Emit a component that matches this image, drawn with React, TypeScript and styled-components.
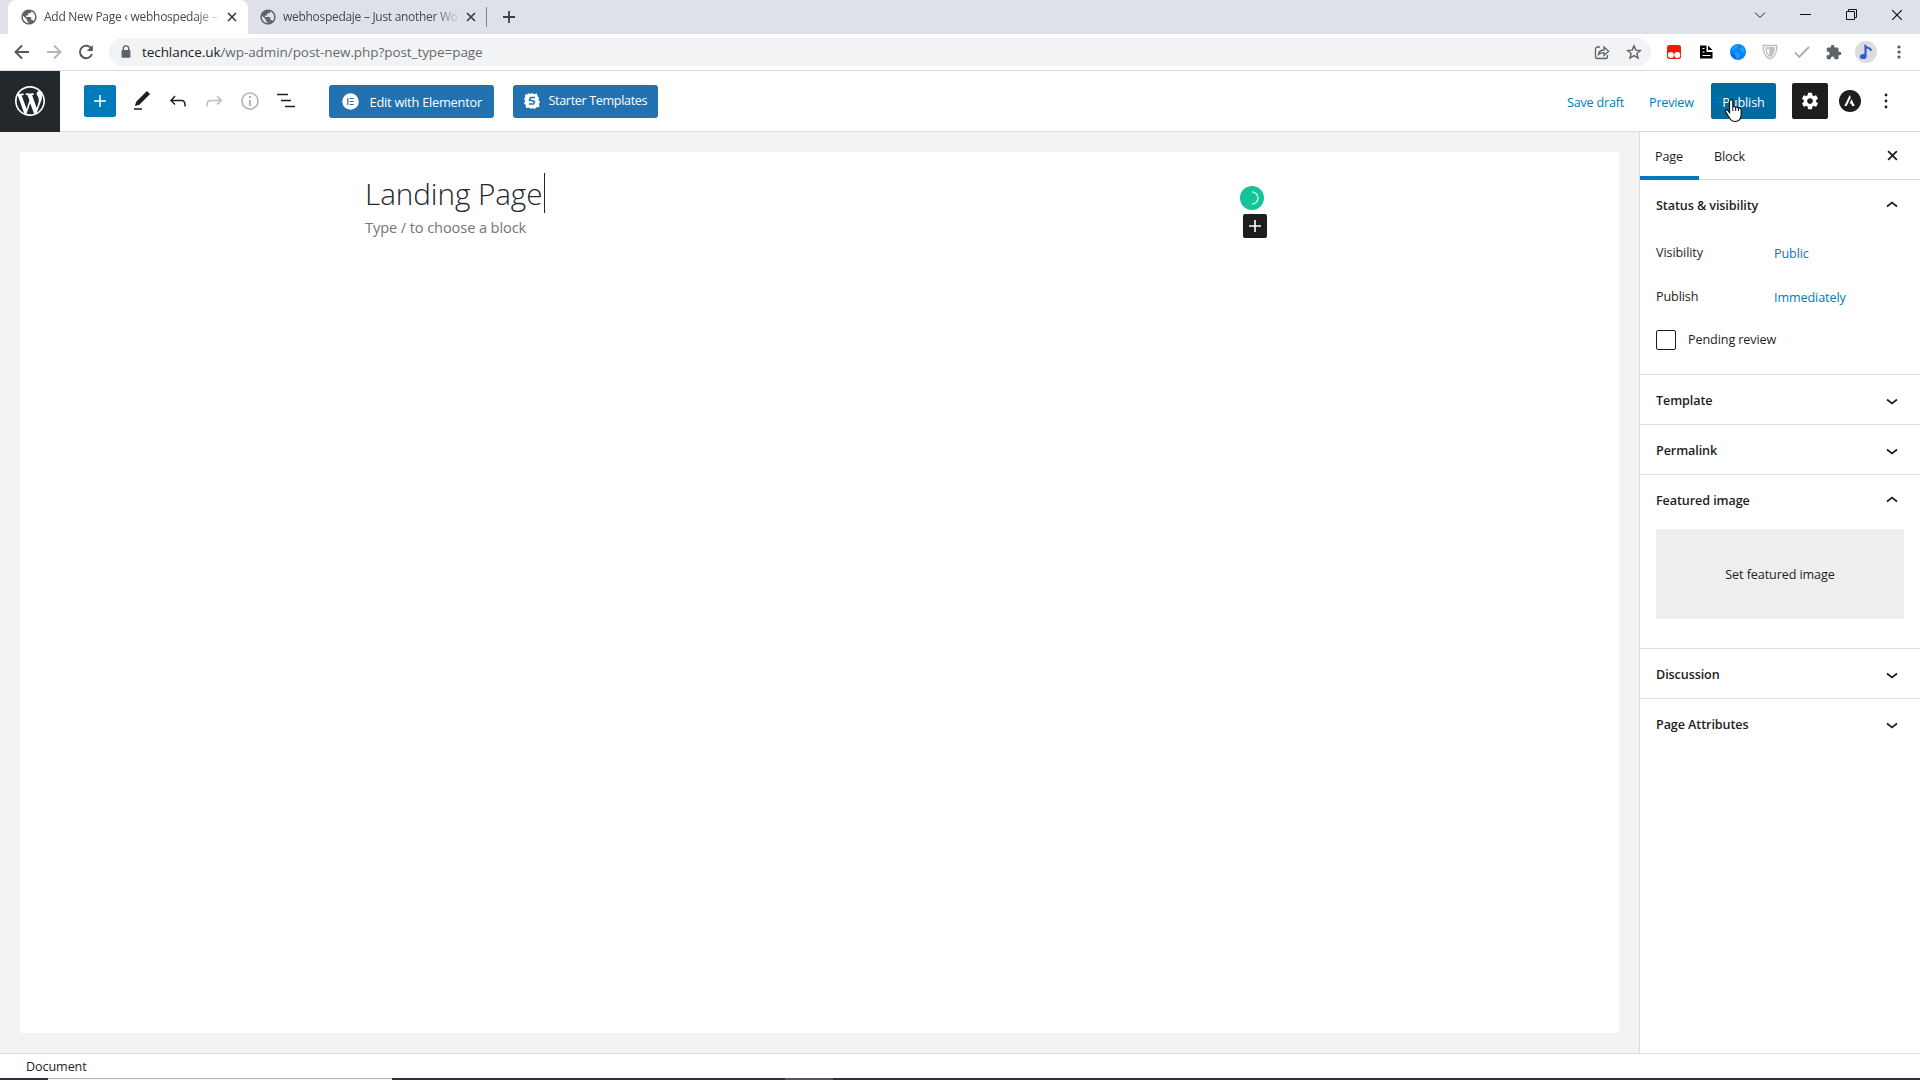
import React from 'react';
import styled, { createGlobalStyle } from 'styled-components';

const Global = createGlobalStyle`
  * { box-sizing: border-box; }
  body { margin: 0; overflow: hidden; font-family: "Open Sans", "Noto Sans", sans-serif; color: #1e1e1e; background: #fff; }
  svg { display: block; flex: none; }
  button { font: inherit; color: inherit; border: 0; background: none; padding: 0; display: flex; align-items: center; }
`;

const Screen = styled.div`
  width: 1920px;
  height: 1080px;
  display: flex;
  flex-direction: column;
  overflow: hidden;
`;

const Label = styled.span<{ $size?: number; $ls?: number; $weight?: number; $color?: string; $dy?: number }>`
  font-size: ${(p) => p.$size ?? 12.6}px;
  letter-spacing: ${(p) => p.$ls ?? -0.1}px;
  font-weight: ${(p) => p.$weight ?? 400};
  color: ${(p) => p.$color ?? 'inherit'};
  line-height: 20px;
  white-space: nowrap;
  padding-top: ${(p) => p.$dy ?? 0}px;
`;

const TabStrip = styled.div`
  height: 34px;
  flex: none;
  background: #dee1e9;
  display: flex;
  justify-content: space-between;
  padding-left: 8px;
`;
const Tabs = styled.div`
  display: flex;
  align-items: center;
`;
const BrowserTab = styled.div<{ $active?: boolean }>`
  width: ${(p) => (p.$active ? 240 : 238)}px;
  height: 34px;
  display: flex;
  align-items: center;
  padding-left: ${(p) => (p.$active ? 13 : 12)}px;
  gap: 7px;
  border-radius: 8px 8px 0 0;
  background: ${(p) => (p.$active ? '#fff' : 'transparent')};
`;
const TabTitle = styled.div`
  width: 176px;
  display: flex;
  mask-image: linear-gradient(to right, #000 86%, transparent 101%);
`;
const TabDivider = styled.div`
  width: 1px;
  height: 20px;
  background: #80868b;
  margin-right: 16px;
`;
const WindowControls = styled.div`
  display: flex;
  align-items: center;
  height: 29px;
  gap: 34.5px;
  padding-right: 17px;
`;

const AddressRow = styled.div`
  height: 37px;
  flex: none;
  border-bottom: 1px solid #d9dbde;
  display: flex;
  align-items: center;
  padding: 0 13px 0 14px;
`;
const NavButtons = styled.div`
  display: flex;
  gap: 16px;
  width: 95px;
`;
const Omnibox = styled.div`
  height: 28px;
  width: 1542px;
  border-radius: 14px;
  background: #f1f3f4;
  display: flex;
  align-items: center;
  padding: 0 9px;
  gap: 8px;
`;
const UrlHost = styled.span`
  color: #202124;
`;
const Spacer = styled.div`
  flex: 1;
`;
const OmniActions = styled.div`
  display: flex;
  gap: 16px;
`;
const Extensions = styled.div`
  display: flex;
  align-items: center;
  gap: 16px;
  margin-left: 15px;
`;
const Avatar = styled.div`
  width: 22px;
  height: 22px;
  border-radius: 50%;
  background: #dadce0;
  display: grid;
  place-items: center;
  margin: 0 -3px;
`;
const MenuSlot = styled.div`
  margin-left: 6px;
`;

const EditorBar = styled.header`
  height: 61px;
  flex: none;
  border-bottom: 1px solid #ddd;
  display: flex;
  align-items: center;
  background: #fff;
`;
const WpHome = styled.div`
  width: 60px;
  height: 61px;
  background: #23282d;
  display: grid;
  place-items: center;
  margin-right: 24px;
`;
const Inserter = styled.button`
  width: 32px;
  height: 32px;
  background: #007cba;
  border-radius: 2px;
  justify-content: center;
`;
const ToolIcons = styled.div`
  display: flex;
  gap: 12px;
  margin-left: 14px;
`;
const ButtonGroup = styled.div`
  display: flex;
  margin-left: 31px;
`;
const PrimaryButton = styled.button<{ $width: number; $pad: number; $gap: number }>`
  height: 33px;
  width: ${(p) => p.$width}px;
  padding-left: ${(p) => p.$pad}px;
  gap: ${(p) => p.$gap}px;
  background: #2271b1;
  border-radius: 3px;
  color: #fff;
  margin-right: 19px;
`;
const BarActions = styled.div`
  display: flex;
  align-items: center;
`;
const LinkText = styled.button<{ $width: number }>`
  width: ${(p) => p.$width}px;
  color: #007cba;
`;
const Publish = styled.button`
  width: 65px;
  height: 36px;
  background: #006ba1;
  border-radius: 2px;
  color: #fff;
  justify-content: center;
  position: relative;
`;
const Pointer = styled.div`
  position: absolute;
  left: 13px;
  top: 15px;
`;
const Settings = styled.button`
  width: 36px;
  height: 36px;
  background: #1e1e1e;
  border-radius: 2px;
  justify-content: center;
  margin: 0 11px 0 16px;
`;
const MoreSlot = styled.div`
  margin: 0 31px 0 22px;
`;

const Body = styled.div`
  height: 921px;
  flex: none;
  display: flex;
`;
const CanvasArea = styled.main`
  width: 1639px;
  background: #f3f3f3;
  padding: 20px;
`;
const Canvas = styled.div`
  height: 881px;
  width: 1599px;
  background: #fff;
  display: flex;
  padding: 21px 352px 0 345px;
  justify-content: space-between;
`;
const Writing = styled.div`
  display: flex;
  flex-direction: column;
`;
const Title = styled.h1`
  margin: 0;
  height: 40px;
  width: 180px;
  border-right: 1px solid #222;
  font-size: 29.7px;
  font-weight: 330;
  letter-spacing: -0.08px;
  line-height: 42px;
  color: #23282d;
  white-space: nowrap;
`;
const BlockTools = styled.div`
  display: flex;
  flex-direction: column;
  padding-top: 13px;
  gap: 4px;
`;
const AppendBlock = styled.button`
  width: 24px;
  height: 24px;
  background: #1e1e1e;
  border-radius: 2px;
  justify-content: center;
  margin-left: 3px;
`;

const Sidebar = styled.aside`
  width: 281px;
  border-left: 1px solid #ddd;
  background: #fff;
`;
const PanelTabs = styled.div`
  height: 48px;
  display: flex;
  align-items: center;
  border-bottom: 1px solid #ddd;
  padding-right: 22px;
`;
const PanelTab = styled.button<{ $active?: boolean; $width: number }>`
  height: 48px;
  width: ${(p) => p.$width}px;
  padding: 6px 0 0 15px;
  border-bottom: 4px solid ${(p) => (p.$active ? '#007cba' : 'transparent')};
`;
const Panel = styled.section<{ $height: number }>`
  height: ${(p) => p.$height}px;
  border-bottom: 1px solid #e0e0e0;
  padding: 0 16px;
  &:last-child { border-bottom: 0; }
`;
const PanelHeadRow = styled.div`
  height: 49px;
  display: flex;
  align-items: center;
  justify-content: space-between;
  padding-right: 6px;
`;
const ChevronSlot = styled.div<{ $up?: boolean }>`
  padding-top: ${(p) => (p.$up ? 0 : 2)}px;
`;
const Fields = styled.div`
  padding-top: 6px;
`;
const Field = styled.div`
  display: flex;
  height: 36px;
  margin-bottom: 8px;
  align-items: center;
  & > :first-child { width: 118px; }
`;
const Check = styled.div`
  display: flex;
  align-items: center;
  gap: 12px;
  margin-top: 15px;
`;
const Box = styled.div`
  width: 20px;
  height: 20px;
  border: 1px solid #1e1e1e;
  border-radius: 2px;
`;
const FeatureSlot = styled.div`
  height: 90px;
  width: 248px;
  margin-top: 5px;
  background: #eee;
  display: grid;
  place-items: center;
`;

const Footer = styled.footer`
  height: 25px;
  flex: none;
  border-top: 1px solid #ddd;
  padding-left: 26px;
  display: flex;
  align-items: center;
`;
const Taskbar = styled.div`
  height: 2px;
  flex: none;
  display: flex;
  background: #2f3033;
`;
const TaskSegment = styled.div<{ $width: number; $color: string; $edge?: string }>`
  width: ${(p) => p.$width}px;
  background: ${(p) => p.$color};
  border-top: 1px solid ${(p) => p.$edge ?? p.$color};
`;

const Globe = () => (
  <svg width="16" height="16" viewBox="1.5 1.5 21 21">
    <path fill="#5f6368" d="M12 2C6.480 2 2 6.480 2 12s4.480 10 10 10 10-4.480 10-10S17.520 2 12 2zm-1 17.930c-3.950-.490-7-3.850-7-7.930 0-.620.080-1.210.210-1.790L9 15v1c0 1.100.900 2 2 2v1.930zm6.900-2.540c-.260-.810-1-1.390-1.900-1.390h-1v-3c0-.550-.450-1-1-1H8v-2h2c.550 0 1-.450 1-1V7h2c1.100 0 2-.900 2-2v-.410c2.930 1.190 5 4.060 5 7.410 0 2.080-.800 3.970-2.100 5.390z" />
  </svg>
);
const Cross = ({ s = 10, w = 1.7, c = '#3c4043' }: { s?: number; w?: number; c?: string }) => (
  <svg width={s} height={s} viewBox="0 0 10 10"><path d="M1 1l8 8M9 1L1 9" stroke={c} strokeWidth={w} /></svg>
);
const Plus = ({ s, w = 2, c = '#fff' }: { s: number; w?: number; c?: string }) => (
  <svg width={s} height={s} viewBox="0 0 12 12"><path d="M6 0v12M0 6h12" stroke={c} strokeWidth={w} /></svg>
);
const Arrow = ({ right }: { right?: boolean }) => (
  <svg width="16" height="16" viewBox="0 0 16 16" fill="none" stroke={right ? '#b5b7ba' : '#55585c'} strokeWidth="1.9">
    <path d={right ? 'M1 8h13M8 1.5L14.5 8 8 14.5' : 'M15 8H2M8 1.5L1.5 8 8 14.5'} />
  </svg>
);
const Chevron = ({ up }: { up?: boolean }) => (
  <svg width="12" height="8" viewBox="0 0 12 8" fill="none" stroke="#1e1e1e" strokeWidth="1.7">
    <path d={up ? 'M1 5.5L6 1.6l5 3.9' : 'M1 2.5L6 6.4l5-3.9'} />
  </svg>
);
const Dots = ({ c, r, s }: { c: string; r: number; s: number }) => (
  <svg width="6" height="18" viewBox="0 0 6 18" fill={c}>
    <circle cx="3" cy={9 - s} r={r} /><circle cx="3" cy="9" r={r} /><circle cx="3" cy={9 + s} r={r} />
  </svg>
);

const EditorIcon = ({ d, c = '#1e1e1e' }: { d: string; c?: string }) => (
  <svg width="24" height="24" viewBox="0 0 24 24" fill={c}><path d={d} /></svg>
);
const UNDO = 'M18.3 11.7c-.6-.6-1.4-.9-2.3-.9H6.7l2.9-3.3-1.1-1-4.5 5L8.5 16l1-1-2.7-2.7H16c.5 0 .9.2 1.3.5 1 1 1 3.4 1 4.5v.3h1.5v-.2c0-1.5 0-4.3-1.5-5.7z';
const REDO = 'M15.6 6.5l-1.1 1 2.9 3.3H8c-.9 0-1.7.3-2.3.9-1.4 1.5-1.4 4.2-1.4 5.6v.2h1.5v-.3c0-1.1 0-3.5 1-4.5.3-.3.7-.5 1.3-.5h9.2L14.5 15l1.1 1.1 4.6-4.6-4.6-5z';
const INFO = 'M12 3.2c-4.8 0-8.8 3.9-8.8 8.8 0 4.8 3.9 8.8 8.8 8.8 4.8 0 8.8-3.9 8.8-8.8 0-4.8-4-8.8-8.8-8.8zm0 16c-4 0-7.2-3.3-7.2-7.2C4.8 8 8 4.8 12 4.8s7.2 3.3 7.2 7.2c0 4-3.2 7.2-7.2 7.2zM11 17h2v-6h-2v6zm0-8h2V7h-2v2z';
const GEAR = 'M19.43 12.98c.04-.32.07-.64.07-.98s-.03-.66-.07-.98l2.11-1.65c.19-.15.24-.42.12-.64l-2-3.46c-.12-.22-.39-.3-.61-.22l-2.49 1c-.52-.4-1.08-.73-1.69-.98l-.38-2.65C14.46 2.18 14.25 2 14 2h-4c-.25 0-.46.18-.49.42l-.38 2.65c-.61.25-1.17.59-1.69.98l-2.49-1c-.23-.09-.49 0-.61.22l-2 3.46c-.13.22-.07.49.12.64l2.11 1.65c-.04.32-.07.65-.07.98s.03.66.07.98l-2.11 1.65c-.19.15-.24.42-.12.64l2 3.46c.12.22.39.3.61.22l2.49-1c.52.4 1.08.73 1.69.98l.38 2.65c.03.24.24.42.49.42h4c.25 0 .46-.18.49-.42l.38-2.65c.61-.25 1.17-.59 1.69-.98l2.49 1c.23.09.49 0 .61-.22l2-3.46c.12-.22.07-.49-.12-.64l-2.11-1.65zM12 15.5c-1.93 0-3.5-1.57-3.5-3.5s1.57-3.5 3.5-3.5 3.5 1.57 3.5 3.5-1.57 3.5-3.5 3.5z';
const WORDPRESS = 'M20 10c0-5.51-4.49-10-10-10C4.48 0 0 4.49 0 10c0 5.52 4.48 10 10 10 5.51 0 10-4.48 10-10zM7.78 15.37L4.37 6.22c.55-.02 1.17-.08 1.17-.08.5-.06.44-1.13-.06-1.11 0 0-1.45.11-2.37.11-.18 0-.37 0-.58-.01C4.12 2.69 6.87 1.11 10 1.11c2.33 0 4.45.87 6.05 2.34-.68-.11-1.65.39-1.65 1.58 0 .74.45 1.36.9 2.1.35.61.55 1.36.55 2.46 0 1.49-1.4 5-1.4 5l-3.03-8.37c.54-.02.82-.17.82-.17.5-.05.44-1.25-.06-1.22 0 0-1.44.12-2.38.12-.87 0-2.33-.12-2.33-.12-.5-.03-.56 1.2-.06 1.22l.92.08 1.26 3.41zM17.41 10c.24-.64.74-1.87.43-4.25.7 1.29 1.05 2.71 1.05 4.25 0 3.29-1.73 6.24-4.4 7.78.97-2.59 1.94-5.2 2.92-7.78zM6.1 18.09C3.12 16.65 1.11 13.53 1.11 10c0-1.3.23-2.48.72-3.59C3.25 10.3 4.67 14.2 6.1 18.09zm4.03-6.63l2.58 6.98c-.86.29-1.76.45-2.71.45-.79 0-1.57-.11-2.29-.33.81-2.38 1.62-4.74 2.42-7.1z';
const PUZZLE = 'M20.5 11H19V7c0-1.1-.9-2-2-2h-4V3.5a2.5 2.5 0 0 0-5 0V5H4c-1.1 0-2 .9-2 2v3.8h1.5a2.7 2.7 0 0 1 0 5.4H2V20c0 1.1.9 2 2 2h3.8v-1.5a2.7 2.7 0 0 1 5.4 0V22H17c1.1 0 2-.9 2-2v-4h1.5a2.5 2.5 0 0 0 0-5z';

const PanelHead = ({ title, up }: { title: string; up?: boolean }) => (
  <PanelHeadRow>
    <Label $weight={570} $ls={-0.1} $dy={2}>{title}</Label>
    <ChevronSlot $up={up}><Chevron up={up} /></ChevronSlot>
  </PanelHeadRow>
);

export default function App() {
  return (
    <Screen>
      <Global />
      <TabStrip>
        <Tabs>
          <BrowserTab $active>
            <Globe />
            <TabTitle><Label $size={12} $ls={-0.27} $color="#45484c">Add New Page ‹ webhospedaje –</Label></TabTitle>
            <Cross />
          </BrowserTab>
          <BrowserTab>
            <Globe />
            <TabTitle><Label $size={12} $ls={-0.29} $color="#45484c">webhospedaje – Just another Wo</Label></TabTitle>
            <Cross />
          </BrowserTab>
          <TabDivider />
          <Plus s={12} w={1.8} c="#3c4043" />
        </Tabs>
        <WindowControls>
          <svg width="12" height="8" viewBox="0 0 12 8" fill="none" stroke="#222"><path d="M1 1.5l5 5 5-5" /></svg>
          <svg width="11" height="11" viewBox="0 0 11 11" stroke="#111"><path d="M0 5.5h11" /></svg>
          <svg width="11" height="11" viewBox="0 0 11 11" fill="none" stroke="#111"><path d="M.5 2.5h8v8h-8zM2.5 2.5v-2h8v8h-2" /></svg>
          <Cross s={12} w={1} c="#111" />
        </WindowControls>
      </TabStrip>

      <AddressRow>
        <NavButtons>
          <Arrow />
          <Arrow right />
          <svg width="16" height="16" viewBox="0 0 16 16" fill="none" stroke="#55585c" strokeWidth="2"><path d="M13.6 5A6.2 6.2 0 1 0 14 10" /><path d="M14.8 1v6h-6z" fill="#55585c" stroke="none" /></svg>
        </NavButtons>
        <Omnibox>
          <svg width="16" height="16" viewBox="0 0 16 16"><path d="M5.3 6.5V4.6a2.7 2.7 0 0 1 5.4 0v1.9" fill="none" stroke="#5f6368" strokeWidth="1.4" /><rect x="3.6" y="6" width="8.8" height="7.8" rx="1" fill="#5f6368" /></svg>
          <Label $size={13.5} $ls={-0.07} $color="#666a6e">
            <UrlHost>techlance.uk</UrlHost>/wp-admin/post-new.php?post_type=page
          </Label>
          <Spacer />
          <OmniActions>
            <svg width="16" height="16" viewBox="0 0 16 16" fill="none" stroke="#5f6368" strokeWidth="1.3"><path d="M6 3H3.5A2 2 0 0 0 1.5 5v7.5a2 2 0 0 0 2 2h8a2 2 0 0 0 2-2V11M4.5 10.5c.3-3 2-4.5 5.5-4.5V3l4.600 4.300L10 11.500V8.600c-2.600 0-4.200.5-5.500 1.900z" /></svg>
            <svg width="16" height="16" viewBox="0 0 16 16" fill="none" stroke="#5f6368" strokeWidth="1.4"><path d="M8 1.900l1.800 4.200 4.600.4-3.500 3 1.100 4.500L8 11.600 4 14l1.100-4.500-3.500-3 4.600-.4z" /></svg>
          </OmniActions>
        </Omnibox>
        <Extensions>
          <svg width="16" height="16" viewBox="0 0 16 16"><rect x="1" y="1" width="14" height="14" rx="2.5" fill="#e3210b" /><circle cx="4.9" cy="11" r="3" fill="#fff" /><circle cx="11.3" cy="11" r="3" fill="#fff" /></svg>
          <svg width="16" height="16" viewBox="0 0 16 16"><path d="M2 1.500h6.500v6.500h6v6.500H2zM10 1.500l4.500 4.500H10z" fill="#050505" /><path d="M4.500 4.500h2M4.500 8h2M4.500 11.500h8" stroke="#fff" strokeWidth="1.200" /></svg>
          <svg width="16" height="16" viewBox="0 0 16 16"><circle cx="8" cy="8" r="8" fill="#0a84f5" /><path d="M2 4c2-3 5-4 7-4L7 4 3 7zM9 4l4-1 2 4-3 2zM4 9l4-1 2 4-3 3z" fill="#16a0fa" /><path d="M1 9l4 2 1 4C3 14 1 12 1 9z" fill="#0562dc" /></svg>
          <svg width="16" height="16" viewBox="0 0 16 16" fill="none" stroke="#bcbec0" strokeWidth="1.3"><path d="M1.200 1.500h13.600c.3 7-2 11.500-6.800 13.500C3.200 13 .9 8.500 1.200 1.500z" /><path d="M4 4h8c0 4-1.200 6.700-4 8.300C5.200 10.700 4 8 4 4z" /><path d="M8 4h4c0 4-1.200 6.700-4 8.300z" fill="#bcbec0" /></svg>
          <svg width="16" height="16" viewBox="0 0 16 16" fill="none" stroke="#a9abad" strokeWidth="1.8"><path d="M1 8.500l4.300 4.500L15 3" /></svg>
          <svg width="16" height="16" viewBox="1 0 23 23"><path d={PUZZLE} fill="#5f6368" /></svg>
          <Avatar>
            <svg width="16" height="16" viewBox="0 0 16 16"><ellipse cx="5.200" cy="12.500" rx="3.300" ry="2.600" fill="#3559d4" /><path d="M7.500 12.500V2.500c1.700 2 4.600.3 5.700 4.200" fill="none" stroke="#3559d4" strokeWidth="2.200" /></svg>
          </Avatar>
          <MenuSlot><Dots c="#55585c" r={1.6} s={5} /></MenuSlot>
        </Extensions>
      </AddressRow>

      <EditorBar>
        <WpHome><svg width="30" height="30" viewBox="0 0 20 20" fill="#fff"><path d={WORDPRESS} /></svg></WpHome>
        <Inserter><Plus s={12} w={1.5} /></Inserter>
        <ToolIcons>
          <svg width="24" height="24" viewBox="0 0 24 24" fill="#1e1e1e"><path d="M20.100 5.100L16.900 2 6.200 12.700l-1.300 4.400 4.500-1.300L20.100 5.100zM4 19.200h8v1.500H4z" /></svg>
          <EditorIcon d={UNDO} />
          <EditorIcon d={REDO} c="#bdbdbd" />
          <EditorIcon d={INFO} c="#b5b5b5" />
          <svg width="24" height="24" viewBox="0 0 24 24" fill="none" stroke="#1e1e1e" strokeWidth="1.7"><path d="M3 5.500h11M7 11.500h10M11 17.500h10" /></svg>
        </ToolIcons>
        <ButtonGroup>
          <PrimaryButton $width={165} $pad={13} $gap={10.5}>
            <svg width="17" height="17" viewBox="0 0 17 17"><circle cx="8.500" cy="8.500" r="8.300" fill="#fff" /><path d="M5.800 5v7M7.700 5.500h4M7.700 8.500h4M7.700 11.500h4" stroke="#2271b1" strokeWidth="1.200" /></svg>
            <Label $size={12.8} $ls={-0.23} $dy={2}>Edit with Elementor</Label>
          </PrimaryButton>
          <PrimaryButton $width={145} $pad={11} $gap={8.5}>
            <svg width="16" height="16" viewBox="0 0 16 16"><path d="M4 0l2 1 2-1 2 1 3-.5.500 2.500L15 5l-.5 2 1.500 2-1 2 .5 3-3 .2L11 16l-2-1-2 1-1.500-1.200L2 15l-.2-3L0 10.500 1.200 8 0 6l1.300-2L1 1.300l2.500.2z" fill="#fff" /><path d="M11 4.500H6.500l-1 2.500 5 1.500-1 2.500H5" fill="none" stroke="#2271b1" strokeWidth="1.500" /></svg>
            <Label $size={12.6} $ls={-0.35}>Starter Templates</Label>
          </PrimaryButton>
        </ButtonGroup>
        <Spacer />
        <BarActions>
          <LinkText $width={82}><Label $ls={-0.2} $dy={4}>Save draft</Label></LinkText>
          <LinkText $width={62}><Label $ls={-0.2} $dy={4}>Preview</Label></LinkText>
          <Publish>
            <Label $dy={4}>Publish</Label>
            <Pointer>
              <svg width="20" height="25" viewBox="0 0 20 25"><path d="M5.500 14.500V3.500c0-2.500 3.300-2.500 3.300 0V9c.4-1 2.600-.8 2.900.5.600-.8 2.500-.5 2.800.8.800-.6 2.700-.2 2.700 1.700v4.500c0 4-2 7-6.200 7-3 0-4.200-1.300-5.500-3.500l-3.700-6c-1-1.800.9-2.800 2-1.600z" fill="#fff" stroke="#111" strokeWidth="1.200" /><path d="M8.800 9v4M11.700 9.500V13M14.500 10.500V13" stroke="#111" /></svg>
            </Pointer>
          </Publish>
          <Settings><svg width="18" height="18" viewBox="1 1 22 22" fill="#fff"><path d={GEAR} /></svg></Settings>
          <svg width="22" height="22" viewBox="0 0 22 22"><circle cx="11" cy="11" r="11" fill="#1e1e1e" /><path d="M10.700 5L5.300 16h2.300l4.200-8.500zM12.600 9.200l-2.200 4.300h1.700l1 2.500h2.700z" fill="#fff" /></svg>
          <MoreSlot><Dots c="#1e1e1e" r={1.4} s={6} /></MoreSlot>
        </BarActions>
      </EditorBar>

      <Body>
        <CanvasArea>
          <Canvas>
            <Writing>
              <Title>Landing Page</Title>
              <Label $size={14.6} $color="#757575" $dy={4}>Type / to choose a block</Label>
            </Writing>
            <BlockTools>
              <svg width="24" height="24" viewBox="0 0 24 24"><circle cx="12" cy="12" r="12" fill="#15c39a" /><path d="M12 6a6 6 0 1 1 0 12" fill="none" stroke="#b9f3e2" strokeWidth="1.5" /></svg>
              <AppendBlock><Plus s={12} w={1.6} /></AppendBlock>
            </BlockTools>
          </Canvas>
        </CanvasArea>
        <Sidebar>
          <PanelTabs>
            <PanelTab $active $width={59}><Label $weight={500}>Page</Label></PanelTab>
            <PanelTab $width={64}><Label $weight={500}>Block</Label></PanelTab>
            <Spacer />
            <Cross s={11} w={1.6} c="#1e1e1e" />
          </PanelTabs>
          <Panel $height={195}>
            <PanelHead title="Status &amp; visibility" up />
            <Fields>
              <Field><Label>Visibility</Label><Label $color="#007cba" $dy={2}>Public</Label></Field>
              <Field><Label>Publish</Label><Label $color="#007cba" $dy={2}>Immediately</Label></Field>
              <Check><Box /><Label>Pending review</Label></Check>
            </Fields>
          </Panel>
          <Panel $height={50}><PanelHead title="Template" /></Panel>
          <Panel $height={50}><PanelHead title="Permalink" /></Panel>
          <Panel $height={174}>
            <PanelHead title="Featured image" up />
            <FeatureSlot><Label $dy={2}>Set featured image</Label></FeatureSlot>
          </Panel>
          <Panel $height={50}><PanelHead title="Discussion" /></Panel>
          <Panel $height={50}><PanelHead title="Page Attributes" /></Panel>
        </Sidebar>
      </Body>

      <Footer><Label $dy={2}>Document</Label></Footer>
      <Taskbar>
        <TaskSegment $width={48} $color="#2f3033" />
        <TaskSegment $width={344} $color="#f4f4f4" $edge="#b8b8b8" />
        <TaskSegment $width={393} $color="#2f3033" />
        <TaskSegment $width={48} $color="#55565a" />
      </Taskbar>
    </Screen>
  );
}
